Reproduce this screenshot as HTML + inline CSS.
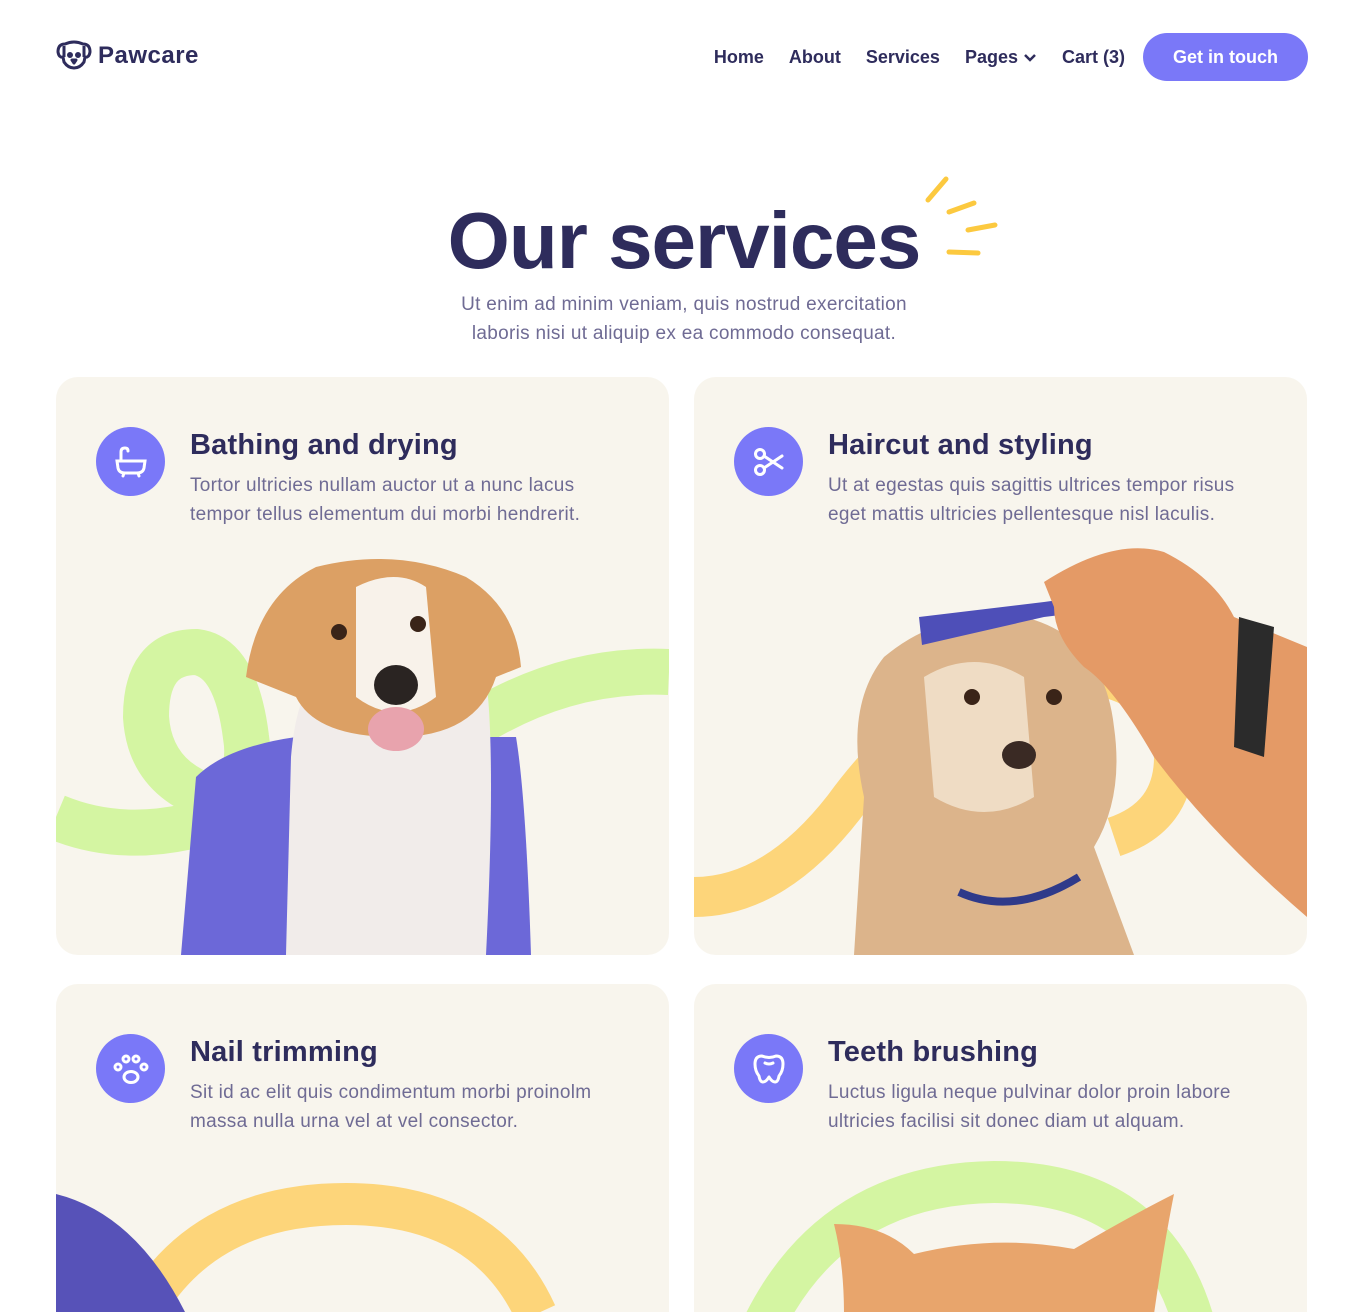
<!DOCTYPE html>
<html><head><meta charset="utf-8"><style>
*{margin:0;padding:0;box-sizing:border-box}
html,body{width:1368px;height:1312px;overflow:hidden}
body{background:#fff;font-family:"Liberation Sans",sans-serif;color:#2e2c5c;position:relative}
.logo{position:absolute;left:56px;top:40px;height:30px;display:flex;align-items:center;gap:6px;font-weight:bold;font-size:24px;letter-spacing:0.5px}
nav{position:absolute;top:33px;right:60px;display:flex;align-items:center;font-weight:bold;font-size:18px}
nav a{margin-right:25px}
.btn{background:#7a78f8;color:#fff;border-radius:24px;width:165px;height:48px;display:flex;align-items:center;justify-content:center;margin-left:-7px}
h1{position:absolute;left:0;width:1368px;text-align:center;top:196px;font-size:80px;letter-spacing:-1px;line-height:90px}
.sub{position:absolute;left:0;width:1368px;text-align:center;top:290px;font-size:19px;line-height:29px;color:#6f6b94;letter-spacing:0.3px}
.card{position:absolute;width:613px;height:578px;background:#f8f5ed;border-radius:22px;overflow:hidden}
.card svg.bg{position:absolute;left:0;top:0}
.ic{position:absolute;left:40px;top:50px;width:69px;height:69px;border-radius:50%;background:#7a78f8;display:flex;align-items:center;justify-content:center}
.t{position:absolute;left:134px;top:52px;font-size:29px;font-weight:bold;letter-spacing:0.2px}
.d{position:absolute;left:134px;top:94px;font-size:19px;line-height:29px;color:#6f6b94;width:425px;letter-spacing:0.3px}
</style></head><body>
<div class="logo"><svg width="36" height="30" viewBox="0 0 36 30" fill="none" stroke="#2e2c5c" stroke-width="3" stroke-linejoin="round"><path d="M9 4 Q18 0 27 4 Q34 4 34 12 Q33 18 29 17 L28 22 Q24 28 18 28 Q12 28 8 22 L7 17 Q3 18 2 12 Q2 4 9 4Z"/><path d="M8 6 L8 17 M28 6 L28 17"/><circle cx="14" cy="15" r="1.5" fill="#2e2c5c"/><circle cx="22" cy="15" r="1.5" fill="#2e2c5c"/><path d="M16 20 L20 20 L18 23Z" fill="#2e2c5c"/></svg><span style="position:relative;top:1px">Pawcare</span></div>
<nav><a>Home</a><a>About</a><a>Services</a><a>Pages <svg width="14" height="10" viewBox="0 0 14 10" fill="none" stroke="#2e2c5c" stroke-width="2.5"><path d="M2 2 L7 7 L12 2"/></svg></a><a>Cart (3)</a><span class="btn">Get in touch</span></nav>
<h1>Our services</h1>
<svg style="position:absolute;left:922px;top:172px" width="80" height="90" fill="none" stroke="#fcc93f" stroke-width="5" stroke-linecap="round"><path d="M6 28 L24 7"/><path d="M27 40 L52 31"/><path d="M46 58 L73 53"/><path d="M27 80 L56 81"/></svg>
<div class="sub">Ut enim ad minim veniam, quis nostrud exercitation<br>laboris nisi ut aliquip ex ea commodo consequat.</div>

<div class="card" style="left:56px;top:377px">
<svg class="bg" width="613" height="578"><path d="M0 440 Q60 465 130 450 Q200 420 190 360 Q180 280 140 275 Q90 275 90 340 Q95 420 200 430 Q300 430 400 360 Q500 290 613 295" stroke="#d4f5a2" stroke-width="46" fill="none"/>
<path d="M125 578 L140 400 Q170 370 240 360 L460 360 Q470 420 475 578Z" fill="#6c68d8"/>
<path d="M230 578 L235 380 Q240 320 260 300 L430 300 Q440 380 430 578Z" fill="#f1ecea"/>
<path d="M190 300 Q200 220 260 190 Q340 170 410 200 Q460 230 465 290 L440 300 Q420 360 340 360 Q260 360 240 320Z" fill="#dca064"/>
<path d="M300 210 Q340 190 370 210 L380 320 Q340 350 300 320Z" fill="#f8f2ea"/>
<ellipse cx="340" cy="308" rx="22" ry="20" fill="#2a2422"/><ellipse cx="340" cy="352" rx="28" ry="22" fill="#e8a3ad"/>
<circle cx="283" cy="255" r="8" fill="#3a2418"/><circle cx="362" cy="247" r="8" fill="#3a2418"/></svg>
<div class="ic"><svg width="36" height="36" viewBox="0 0 36 36" fill="none" stroke="#fff" stroke-width="3" stroke-linecap="round"><path d="M8 17 L8 8 Q8 4 12 4 Q15 4 15 7"/><path d="M4 17 L32 17 L31 24 Q30 29 24 29 L12 29 Q6 29 5 24Z"/><path d="M11 29 L10 32 M25 29 L26 32"/></svg></div>
<div class="t">Bathing and drying</div>
<div class="d" style="width:400px">Tortor ultricies nullam auctor ut a nunc lacus tempor tellus elementum dui morbi hendrerit.</div>
</div>

<div class="card" style="left:694px;top:377px">
<svg class="bg" width="613" height="578"><path d="M0 520 Q80 520 150 430 Q230 320 330 300 Q470 280 480 380 Q480 440 420 460" stroke="#fdd57a" stroke-width="40" fill="none"/>
<path d="M160 578 L170 420 Q150 330 190 280 Q250 230 330 240 Q410 260 420 350 Q430 420 400 470 L440 578Z" fill="#dcb48b"/>
<path d="M230 300 Q280 270 330 300 L340 420 Q290 450 240 420Z" fill="#efdcc4"/>
<circle cx="278" cy="320" r="8" fill="#3a2418"/><circle cx="360" cy="320" r="8" fill="#3a2418"/><ellipse cx="325" cy="378" rx="17" ry="14" fill="#3a2a24"/>
<path d="M265 515 Q320 540 385 500" stroke="#2f3a8a" stroke-width="8" fill="none"/>
<path d="M225 240 L350 225 L445 212 L448 228 L350 240 L228 268Z" fill="#4e4fb8"/>
<path d="M350 205 Q420 160 470 175 Q520 200 540 240 L613 270 L613 540 Q520 460 460 380 Q420 310 390 290 Q360 260 360 230Z" fill="#e49a66"/>
<path d="M545 240 L580 250 L570 380 L540 370Z" fill="#2b2b2b"/></svg>
<div class="ic"><svg width="36" height="36" viewBox="0 0 36 36" fill="none" stroke="#fff" stroke-width="3" stroke-linecap="round"><circle cx="9" cy="10" r="4.5"/><circle cx="9" cy="26" r="4.5"/><path d="M13 12 L31 24 M13 24 L31 12"/></svg></div>
<div class="t">Haircut and styling</div>
<div class="d">Ut at egestas quis sagittis ultrices tempor risus eget mattis ultricies pellentesque nisl laculis.</div>
</div>

<div class="card" style="left:56px;top:984px;height:328px;border-radius:22px 22px 0 0">
<svg class="bg" width="613" height="328"><path d="M80 340 Q140 220 290 220 Q430 220 480 330" stroke="#fdd57a" stroke-width="42" fill="none"/>
<path d="M0 210 Q80 230 130 330 L0 340Z" fill="#5752b8"/></svg>
<div class="ic"><svg width="38" height="38" viewBox="0 0 38 38" fill="none" stroke="#fff" stroke-width="3"><ellipse cx="19" cy="27" rx="7" ry="5.5"/><circle cx="14" cy="9" r="3"/><circle cx="24" cy="9" r="3"/><circle cx="6" cy="17" r="3"/><circle cx="32" cy="17" r="3"/></svg></div>
<div class="t">Nail trimming</div>
<div class="d">Sit id ac elit quis condimentum morbi proinolm massa nulla urna vel at vel consector.</div>
</div>

<div class="card" style="left:694px;top:984px;height:328px;border-radius:22px 22px 0 0">
<svg class="bg" width="613" height="328"><path d="M70 340 Q140 200 300 198 Q460 198 500 340" stroke="#d4f5a2" stroke-width="42" fill="none"/>
<path d="M140 240 Q190 240 220 270 Q300 250 380 265 Q440 230 480 210 Q470 260 460 330 L150 330 Q150 280 140 240Z" fill="#e8a56c"/></svg>
<div class="ic"><svg width="36" height="36" viewBox="0 0 36 36" fill="none" stroke="#fff" stroke-width="3" stroke-linejoin="round"><path d="M11 5 Q18 8 25 5 Q32 5 32 13 Q32 20 28 25 Q27 31 24 31 Q21 31 18 26 Q15 31 12 31 Q9 31 8 25 Q4 20 4 13 Q4 5 11 5Z"/><path d="M14 12 Q18 14 22 12" stroke-linecap="round"/></svg></div>
<div class="t">Teeth brushing</div>
<div class="d">Luctus ligula neque pulvinar dolor proin labore ultricies facilisi sit donec diam ut alquam.</div>
</div>
</body></html>
